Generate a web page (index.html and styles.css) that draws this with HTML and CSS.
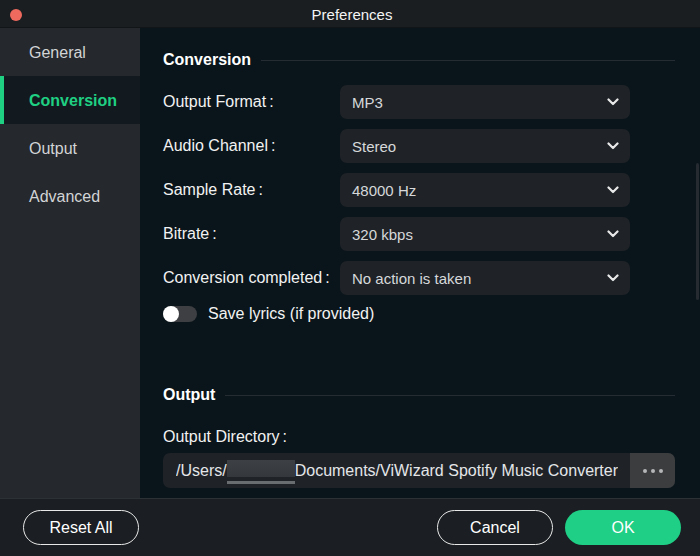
FILE: index.html
```html
<!DOCTYPE html>
<html>
<head>
<meta charset="utf-8">
<link rel="stylesheet" href="styles.css">
</head>
<body>
<div class="window">
  <header class="titlebar">
    <span class="close-dot"></span>
    <span class="title">Preferences</span>
  </header>
  <div class="main">
    <nav class="sidebar">
      <div class="nav-item">General</div>
      <div class="nav-item active">Conversion</div>
      <div class="nav-item">Output</div>
      <div class="nav-item">Advanced</div>
    </nav>
    <section class="content">
      <div class="section-head"><span>Conversion</span><i class="rule"></i></div>
      <div class="form">
        <label class="lbl">Output Format<span class="colon">:</span></label>
        <div class="select"><span>MP3</span><svg class="chev" viewBox="0 0 12 8"><path d="M1.5 1.5 6 6 10.5 1.5" /></svg></div>
        <label class="lbl">Audio Channel<span class="colon">:</span></label>
        <div class="select"><span>Stereo</span><svg class="chev" viewBox="0 0 12 8"><path d="M1.5 1.5 6 6 10.5 1.5" /></svg></div>
        <label class="lbl">Sample Rate<span class="colon">:</span></label>
        <div class="select"><span>48000 Hz</span><svg class="chev" viewBox="0 0 12 8"><path d="M1.5 1.5 6 6 10.5 1.5" /></svg></div>
        <label class="lbl">Bitrate<span class="colon">:</span></label>
        <div class="select"><span>320 kbps</span><svg class="chev" viewBox="0 0 12 8"><path d="M1.5 1.5 6 6 10.5 1.5" /></svg></div>
        <label class="lbl">Conversion completed<span class="colon">:</span></label>
        <div class="select"><span>No action is taken</span><svg class="chev" viewBox="0 0 12 8"><path d="M1.5 1.5 6 6 10.5 1.5" /></svg></div>
      </div>
      <div class="toggle-row">
        <span class="toggle"><span class="knob"></span></span>
        <span class="toggle-label">Save lyrics (if provided)</span>
      </div>
      <div class="section-head out-head"><span>Output</span><i class="rule"></i></div>
      <div class="dir-label">Output Directory<span class="colon">:</span></div>
      <div class="dir-field">
        <div class="dir-path"><span class="dir-text">/Users/<span class="redact"></span>Documents/ViWizard Spotify Music Converter</span></div>
        <button class="dots"><i></i><i></i><i></i></button>
      </div>
      <div class="scrollbar"></div>
    </section>
  </div>
  <footer class="footer">
    <button class="btn outline">Reset All</button>
    <div class="right">
      <button class="btn outline">Cancel</button>
      <button class="btn primary">OK</button>
    </div>
  </footer>
</div>
</body>
</html>
```

FILE: styles.css
```css
* { box-sizing: border-box; }
html, body { margin: 0; padding: 0; background: #1b1f22; }
body { font-family: "Liberation Sans", Arial, sans-serif; color: #f2f2f2; }

.window { width: 700px; height: 556px; display: flex; flex-direction: column; overflow: hidden; }

.titlebar {
  height: 28px; flex: none; background: #1a1e21;
  display: flex; align-items: center; position: relative;
  border-bottom: 1px solid #111518;
}
.close-dot {
  width: 12px; height: 12px; border-radius: 50%; background: #ee6a5e;
  margin-left: 10px; margin-top: 2px;
}
.title {
  position: absolute; left: 0; right: 0; text-align: center;
  font-size: 15px; color: #f4f4f4; padding-left: 4px; margin-top: 1px;
}

.main { flex: 1; display: flex; min-height: 0; }

.sidebar { width: 140px; flex: none; background: #25282c; }
.nav-item {
  height: 48px; display: flex; align-items: center; padding-left: 29px;
  font-size: 16px; color: #d2d4d6; padding-top: 1px;
}
.nav-item.active {
  background: #131a1f; color: #1fd083; font-weight: bold;
  box-shadow: inset 4px 0 0 #1fd083;
}

.content {
  flex: 1; min-width: 0; background: #0a151b; position: relative;
  padding: 23px 25px 0 23px;
}

.section-head {
  display: flex; align-items: center; height: 18px;
  font-size: 16px; font-weight: bold; color: #ffffff;
}
.section-head .rule { flex: 1; height: 1px; background: #252d33; margin-left: 10px; }

.form {
  margin-top: 16px;
  display: grid; grid-template-columns: 177px 290px; row-gap: 10px;
  align-items: center;
}
.lbl { font-size: 16px; color: #f2f2f2; white-space: nowrap; }
.colon { margin-left: 3px; }
.select {
  height: 34px; background: #1f2328; border-radius: 7px;
  display: flex; align-items: center; justify-content: space-between;
  padding: 0 11px 0 12px; font-size: 15px; color: #d6d8da;
}
.chev { width: 12px; height: 8px; fill: none; stroke: #e8e8e8; stroke-width: 2.2; stroke-linecap: round; stroke-linejoin: round; }

.toggle-row { display: flex; align-items: center; margin-top: 11px; height: 16px; }
.toggle {
  width: 34px; height: 16px; border-radius: 8px; background: #3d3f42;
  display: flex; align-items: center;
}
.knob { width: 16px; height: 16px; border-radius: 50%; background: #ffffff; }
.toggle-label { margin-left: 11px; font-size: 16px; color: #f2f2f2; }

.out-head { margin-top: 64px; }
.dir-label { margin-top: 24px; font-size: 16px; height: 18px; line-height: 18px; color: #f2f2f2; }

.dir-field {
  margin-top: 7px; height: 35px; background: #1f2328; border-radius: 7px;
  display: flex; overflow: hidden;
}
.dir-path {
  flex: 1; min-width: 0; display: flex; align-items: center;
  padding: 0 12px 0 13px;
}
.dir-text {
  display: flex; align-items: center; overflow: hidden; white-space: nowrap;
  font-size: 16px; color: #e4e6e8; min-width: 0;
}
.redact {
  display: inline-block; flex: none; width: 68px; height: 24px; margin-top: 2px;
  background: linear-gradient(#3d4145, #34383c 70%, #1f2328 70%, #1f2328 88%, #6a6d70 88%);
}
.dots {
  width: 45px; flex: none; border: 0; background: #3c3d3f; padding: 0;
  display: flex; align-items: center; justify-content: center; gap: 4px;
}
.dots i { width: 4px; height: 4px; border-radius: 50%; background: #b5b6b8; }

.scrollbar {
  position: absolute; right: 1px; top: 135px; width: 3px; height: 137px;
  background: #252b30; border-radius: 2px;
}

.footer {
  height: 58px; flex: none; background: #1b1f23; border-top: 1px solid #2c3135;
  display: flex; align-items: center; justify-content: space-between;
  padding: 0 19px 0 23px;
}
.footer .right { display: flex; gap: 12px; }
.btn {
  width: 116px; height: 35px; border-radius: 18px; font-family: inherit;
  font-size: 16px; color: #ffffff; cursor: pointer;
}
.btn.outline { background: transparent; border: 1.5px solid #e8e8e8; }
.btn.primary { background: #1ecf85; border: 0; }
```
